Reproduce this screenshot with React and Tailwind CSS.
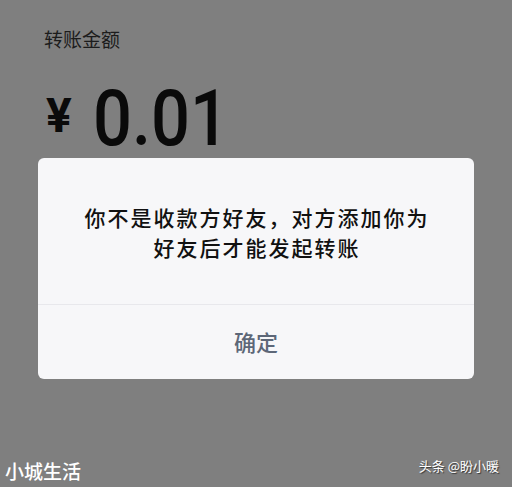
export default function App() {
  const cjk = { fontFamily: '"Noto Sans CJK SC", "Noto Sans", sans-serif' };
  return (
    <div className="w-[512px] h-[487px] bg-[#7f7f7f] flex flex-col overflow-hidden" style={cjk}>
      <div className="pl-[44px] pt-[26px] text-[19px] leading-[26px] text-[#1c1c1c]">转账金额</div>
      <div className="flex items-start pl-[46px] mt-[35px] h-[64px] text-[#0a0a0a]" style={{ fontFamily: 'Roboto, "Noto Sans", sans-serif' }}>
        <span className="text-[48px] leading-[50px] font-bold mt-[4px]">¥</span>
        <span className="ml-[21px] text-[78px] leading-[64px] font-medium tracking-[0px] origin-left scale-x-[0.88] inline-block">0.01</span>
      </div>
      <div className="mt-[7px] ml-[38px] w-[436px] h-[221px] bg-[#f7f7f9] rounded-[6px] flex flex-col">
        <div className="h-[146px] flex flex-col items-center justify-center pt-[1px] pl-[2px] text-[21px] leading-[30px] tracking-[2px] text-[#111] font-medium">
          <div>你不是收款方好友，对方添加你为</div>
          <div>好友后才能发起转账</div>
        </div>
        <div className="h-px bg-[#e8e8ec]" />
        <div className="flex-1 flex items-center justify-center text-[22px] text-[#5d6778] font-medium pb-[2px]">确定</div>
      </div>
      <div className="mt-auto flex items-end justify-between px-[5px] pb-[4px]">
        <span className="text-[19px] leading-[24px] text-white font-medium">小城生活</span>
        <span className="text-[13px] leading-[18px] text-white mb-[8px] mr-[8px]" style={{ textShadow: '1px 1px 1px rgba(0,0,0,0.6)' }}>头条 @盼小暖</span>
      </div>
    </div>
  );
}
